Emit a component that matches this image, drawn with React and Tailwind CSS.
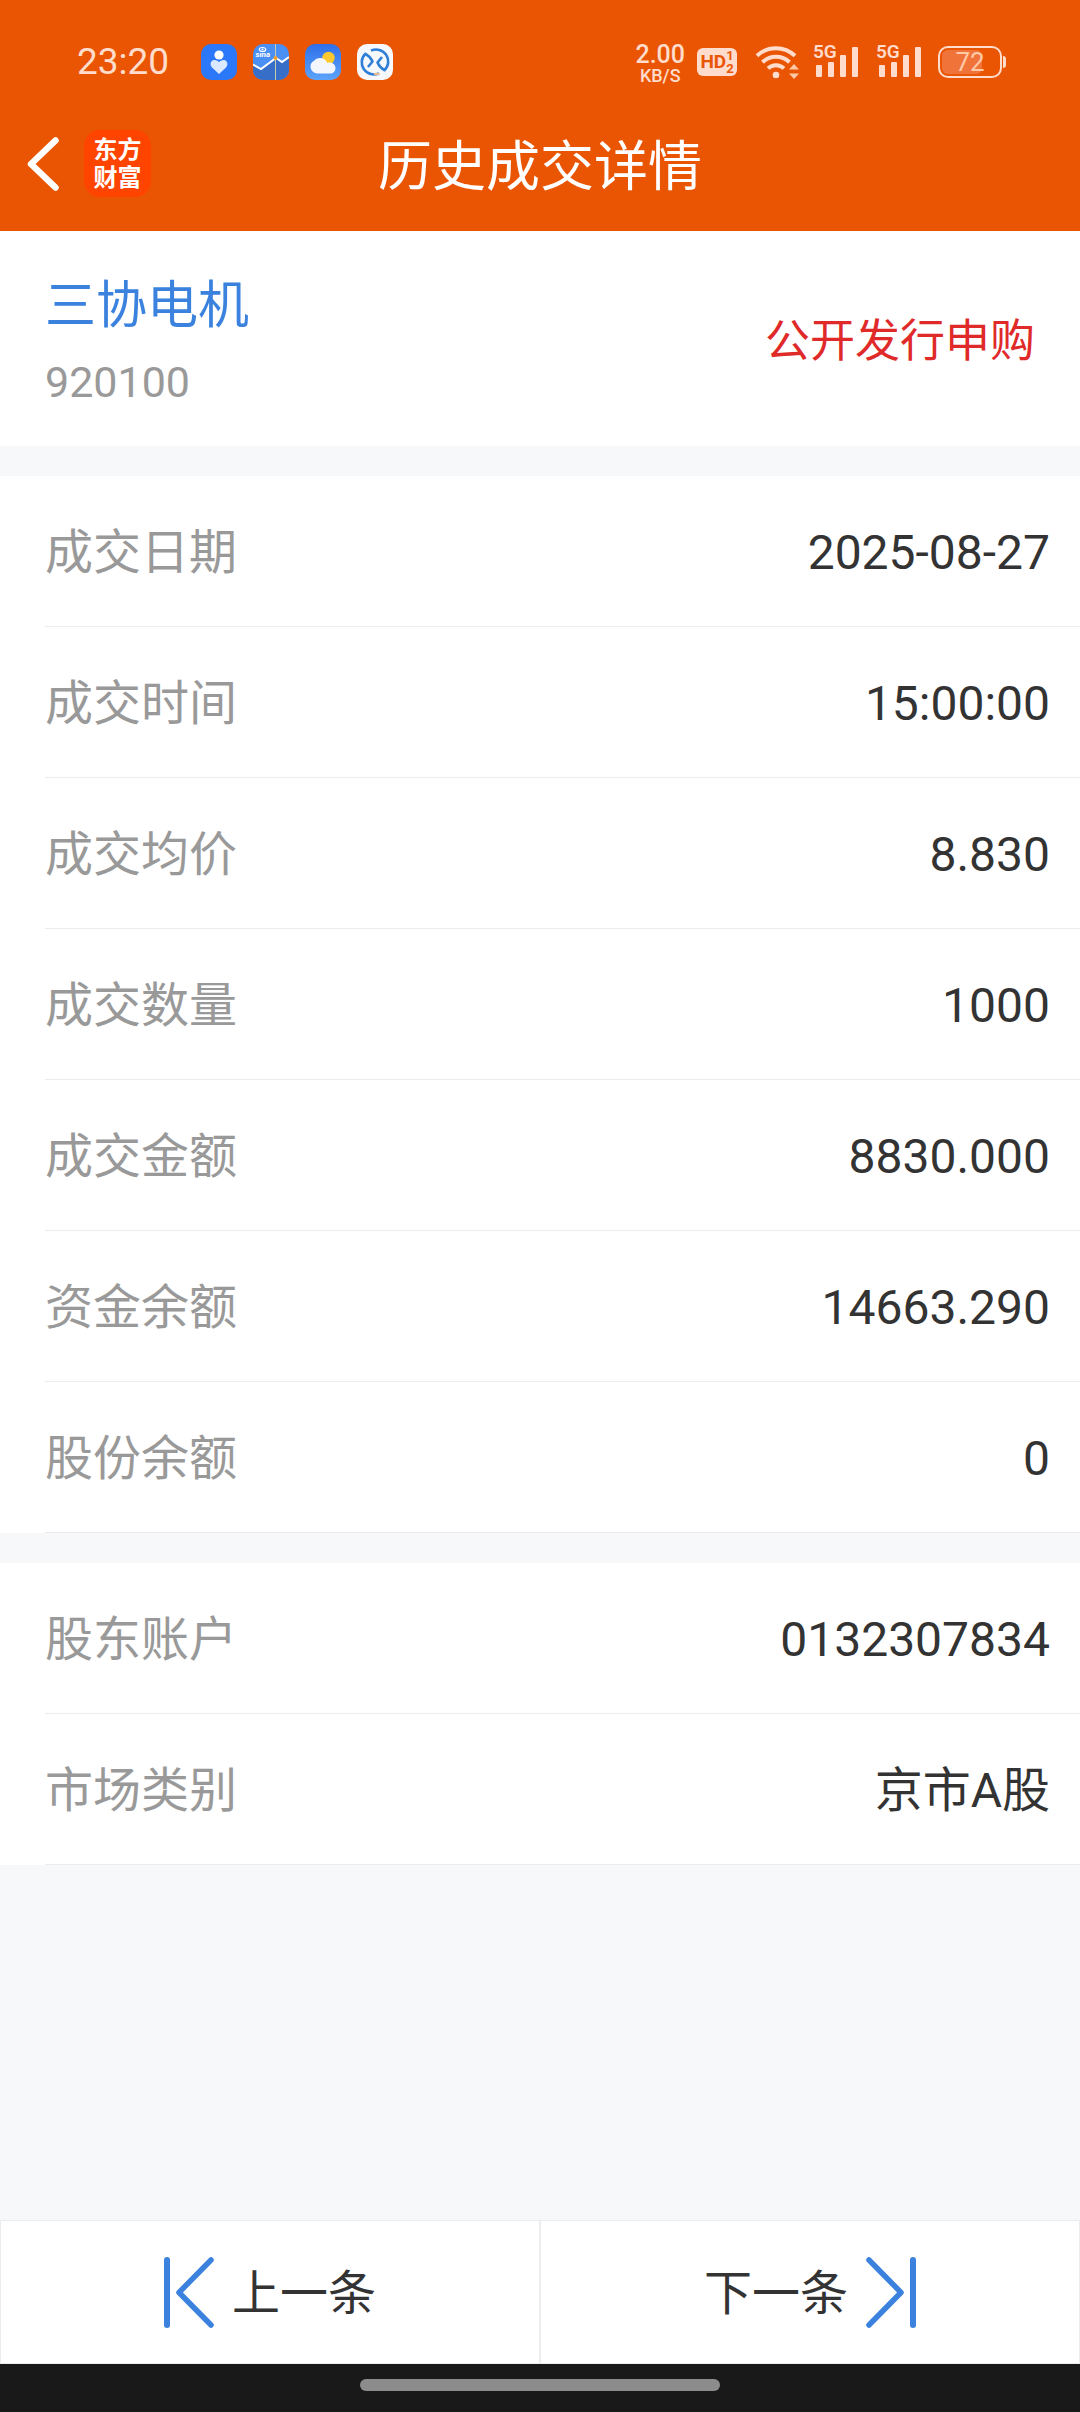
const tradeRows = [
  { label: "成交日期", value: "2025-08-27" },
  { label: "成交时间", value: "15:00:00" },
  { label: "成交均价", value: "8.830" },
  { label: "成交数量", value: "1000" },
  { label: "成交金额", value: "8830.000" },
  { label: "资金余额", value: "14663.290" },
  { label: "股份余额", value: "0" },
];

const accountRows = [
  { label: "股东账户", value: "0132307834" },
  { label: "市场类别", value: "京市A股" },
];

const HealthIcon = () => (
  <svg viewBox="0 0 36 36" className="size-9">
    <rect width="36" height="36" rx="10" fill="#2b78fb" />
    <circle cx="18" cy="11" r="4.6" fill="#fff" />
    <path
      d="M18 30l-7-6.6c-2.6-2.6-1.4-7 2.2-7.4 2-.2 3.6.8 4.8 2.2 1.2-1.4 2.8-2.4 4.8-2.2 3.6.4 4.8 4.8 2.2 7.4z"
      fill="#dbe9ff"
    />
  </svg>
);

const SinaIcon = () => (
  <svg viewBox="0 0 36 36" className="size-9">
    <defs>
      <clipPath id="sina-clip">
        <rect width="36" height="36" rx="10" />
      </clipPath>
    </defs>
    <g clipPath="url(#sina-clip)">
      <rect width="36" height="36" fill="#4a90f4" />
      <path d="M0 20l8 5 15-11 6 4 7-5v23H0z" fill="#376fc8" />
      <path d="M0 20.5l8 4.5 15-11 6 4 7-5" fill="none" stroke="#fff" strokeWidth="2" />
      <path d="M22.5 0v36" stroke="#c9cbb0" strokeWidth="1" />
      <circle cx="22.5" cy="14" r="2" fill="#f2a12c" />
      <ellipse cx="9.5" cy="5.5" rx="3.2" ry="2" fill="none" stroke="#fff" strokeWidth="1.2" />
      <circle cx="9.5" cy="5.5" r="1" fill="#fff" />
      <text x="2.5" y="13" fontSize="8" fontWeight="700" fontStyle="italic" fontFamily="Roboto, sans-serif" fill="#fff">
        sina
      </text>
    </g>
  </svg>
);

const WeatherIcon = () => (
  <svg viewBox="0 0 36 36" className="size-9">
    <defs>
      <linearGradient id="sky" x1="0" y1="0" x2="0" y2="1">
        <stop offset="0" stopColor="#2f6fea" />
        <stop offset="1" stopColor="#5ba4fb" />
      </linearGradient>
    </defs>
    <rect width="36" height="36" rx="10" fill="url(#sky)" />
    <circle cx="23.5" cy="14" r="6.2" fill="#fdc92e" />
    <path
      d="M12 29.5a7 7 0 0 1-6.500-7c0-3 1.600-4.800 3.300-5.500a7.800 7.800 0 0 1 13.400 1.800c5-1.200 8.300 1.700 8.300 5.400 0 3-2.300 5.300-5.500 5.300z"
      fill="#f3f7fd"
    />
  </svg>
);

const RailIcon = () => (
  <svg viewBox="0 0 36 36" className="size-9" fill="none">
    <rect width="36" height="36" rx="10" fill="#f6f8fc" />
    <g stroke="#2f7fd6" strokeWidth="2.6" strokeLinejoin="round">
      <path d="M14 6.7a12 12 0 0 1 13.500 19.500c-3-1.700-5.500-4.200-7-7.700l4.500-5.500" />
      <path d="M22 29.3a12 12 0 0 1-13.500-19.500c3 1.700 5.500 4.200 7 7.700l-4.500 5.500" />
    </g>
    <path d="M17 30h5.5" stroke="#e8b98f" strokeWidth="2.2" />
  </svg>
);

const WifiIcon = () => (
  <svg viewBox="0 0 46 36" className="h-9 w-[46px]" fill="none">
    <g stroke="#ffdccb" strokeWidth="4">
      <path d="M2 11.8a27.5 27.5 0 0 1 38 0" />
      <path d="M7.5 18.2a19.5 19.5 0 0 1 27 0" />
      <path d="M13 24.4a11.5 11.5 0 0 1 16 0" />
    </g>
    <circle cx="21" cy="31" r="3.3" fill="#ffdccb" />
    <path d="M34 25.5l5-5.500 5 5.500zM34 29.500l5 5.500 5-5.500z" fill="#ffc9a8" />
  </svg>
);

const Signal = () => (
  <div className="relative h-9 w-12">
    <svg viewBox="0 0 48 36" className="h-9 w-12" fill="#ffdccb">
      <rect x="3" y="21" width="6" height="12" rx="1" />
      <rect x="15" y="18" width="6" height="15" rx="1" />
      <rect x="27" y="11" width="6" height="22" rx="1" />
      <rect x="39" y="3" width="6" height="30" rx="1" />
    </svg>
    <span className="absolute top-0 left-0 text-[19px] leading-4 font-semibold">5G</span>
  </div>
);

const StatusBar = () => (
  <div className="flex h-24 items-center justify-between pt-7 pr-[74px] pl-[77px] text-[#ffdccb]">
    <div className="flex items-center gap-4">
      <span className="mr-4 text-[37px] leading-10">23:20</span>
      <HealthIcon />
      <SinaIcon />
      <WeatherIcon />
      <RailIcon />
    </div>
    <div className="flex items-center">
      <div className="flex flex-col items-center pt-1 font-medium">
        <span className="text-[25px] leading-6">2.00</span>
        <span className="text-[18px] leading-[18px]">KB/S</span>
      </div>
      <div className="ml-3 flex h-7 w-10 items-center justify-center rounded-md bg-[#ffdccb] font-bold text-[#ea5504]">
        <span className="text-[19px] leading-7">HD</span>
        <span className="flex flex-col text-[13px] leading-[13px]">
          <span>1</span>
          <span>2</span>
        </span>
      </div>
      <div className="ml-[18px]">
        <WifiIcon />
      </div>
      <div className="ml-3 flex gap-[15px]">
        <Signal />
        <Signal />
      </div>
      <div className="ml-[14px] flex items-center gap-px">
        <div className="relative flex h-8 w-16 items-center justify-center rounded-[10px] border-2 border-[#ffdccb]">
          <div className="absolute inset-y-0.5 left-0.5 w-10 rounded-md bg-[#f0733a]" />
          <span className="relative text-[26px] leading-7 text-[#ffc9a8]">72</span>
        </div>
        <div className="h-3 w-[3px] rounded-r bg-[#ffdccb]" />
      </div>
    </div>
  </div>
);

const TitleBar = () => (
  <div className="grid h-[135px] grid-cols-[1fr_auto_1fr] items-center px-6 text-white">
    <div className="flex items-center gap-6">
      <button type="button" aria-label="返回">
        <svg viewBox="0 0 36 56" className="h-14 w-9" fill="none">
          <path d="M31.5 4.5L7 28l24.500 23.500" stroke="#fff" strokeWidth="6.5" strokeLinecap="round" strokeLinejoin="round" />
        </svg>
      </button>
      <div className="flex size-[67px] flex-col items-center justify-center rounded-2xl bg-[#ff4400] text-[24px] leading-7 font-bold">
        <span>东方</span>
        <span>财富</span>
      </div>
    </div>
    <h1 className="pt-2 text-[54px] leading-[72px]">历史成交详情</h1>
  </div>
);

const DetailList = ({ rows }) => (
  <dl className="bg-white pl-[45px]">
    {rows.map((row) => (
      <div
        key={row.label}
        className="flex h-[151px] items-center justify-between border-b border-[#ececee] pt-1 pr-[30px] text-[48px] leading-[72px]"
      >
        <dt className="text-[#999999]">{row.label}</dt>
        <dd className="text-[#333333]">{row.value}</dd>
      </div>
    ))}
  </dl>
);

const StepIcon = ({ flip }) => (
  <svg viewBox="0 0 50 71" className={flip ? "h-[71px] w-[50px] -scale-x-100" : "h-[71px] w-[50px]"} fill="none">
    <g stroke="#3a82de" strokeLinecap="round">
      <path d="M3 3v65" strokeWidth="6" />
      <path d="M47 3L15 35.5l32 32.500" strokeWidth="5.5" strokeLinejoin="round" />
    </g>
  </svg>
);

const App = () => {
  return (
    <div className="flex min-h-screen flex-col bg-[#f7f8fa] font-[Roboto,'Noto_Sans_CJK_SC',sans-serif]">
      <header className="bg-[#ea5504]">
        <StatusBar />
        <TitleBar />
      </header>

      <main className="flex flex-1 flex-col gap-[30px]">
        <section className="flex h-[215px] items-center justify-between bg-white px-[45px] pt-1.5">
          <div>
            <h2 className="text-[51px] leading-[80px] text-[#3a82de]">三协电机</h2>
            <p className="text-[43px] leading-[72px] text-[#999999]">920100</p>
          </div>
          <p className="text-[45px] leading-[72px] text-[#e02a2a]">公开发行申购</p>
        </section>
        <DetailList rows={tradeRows} />
        <DetailList rows={accountRows} />
      </main>

      <nav className="grid h-36 grid-cols-2 bg-white text-[48px] leading-[72px] text-[#333333]">
        <button type="button" className="flex items-center justify-center gap-[18px] border border-[#ececee]">
          <StepIcon />
          <span className="pt-1">上一条</span>
        </button>
        <button type="button" className="flex items-center justify-center gap-[18px] border border-[#ececee]">
          <span className="pt-1">下一条</span>
          <StepIcon flip />
        </button>
      </nav>

      <footer className="flex h-12 items-start justify-center bg-[#191919] pt-[15px]">
        <div className="h-3 w-1/3 rounded-full bg-[#8c8c8c]" />
      </footer>
    </div>
  );
};

export default App;
